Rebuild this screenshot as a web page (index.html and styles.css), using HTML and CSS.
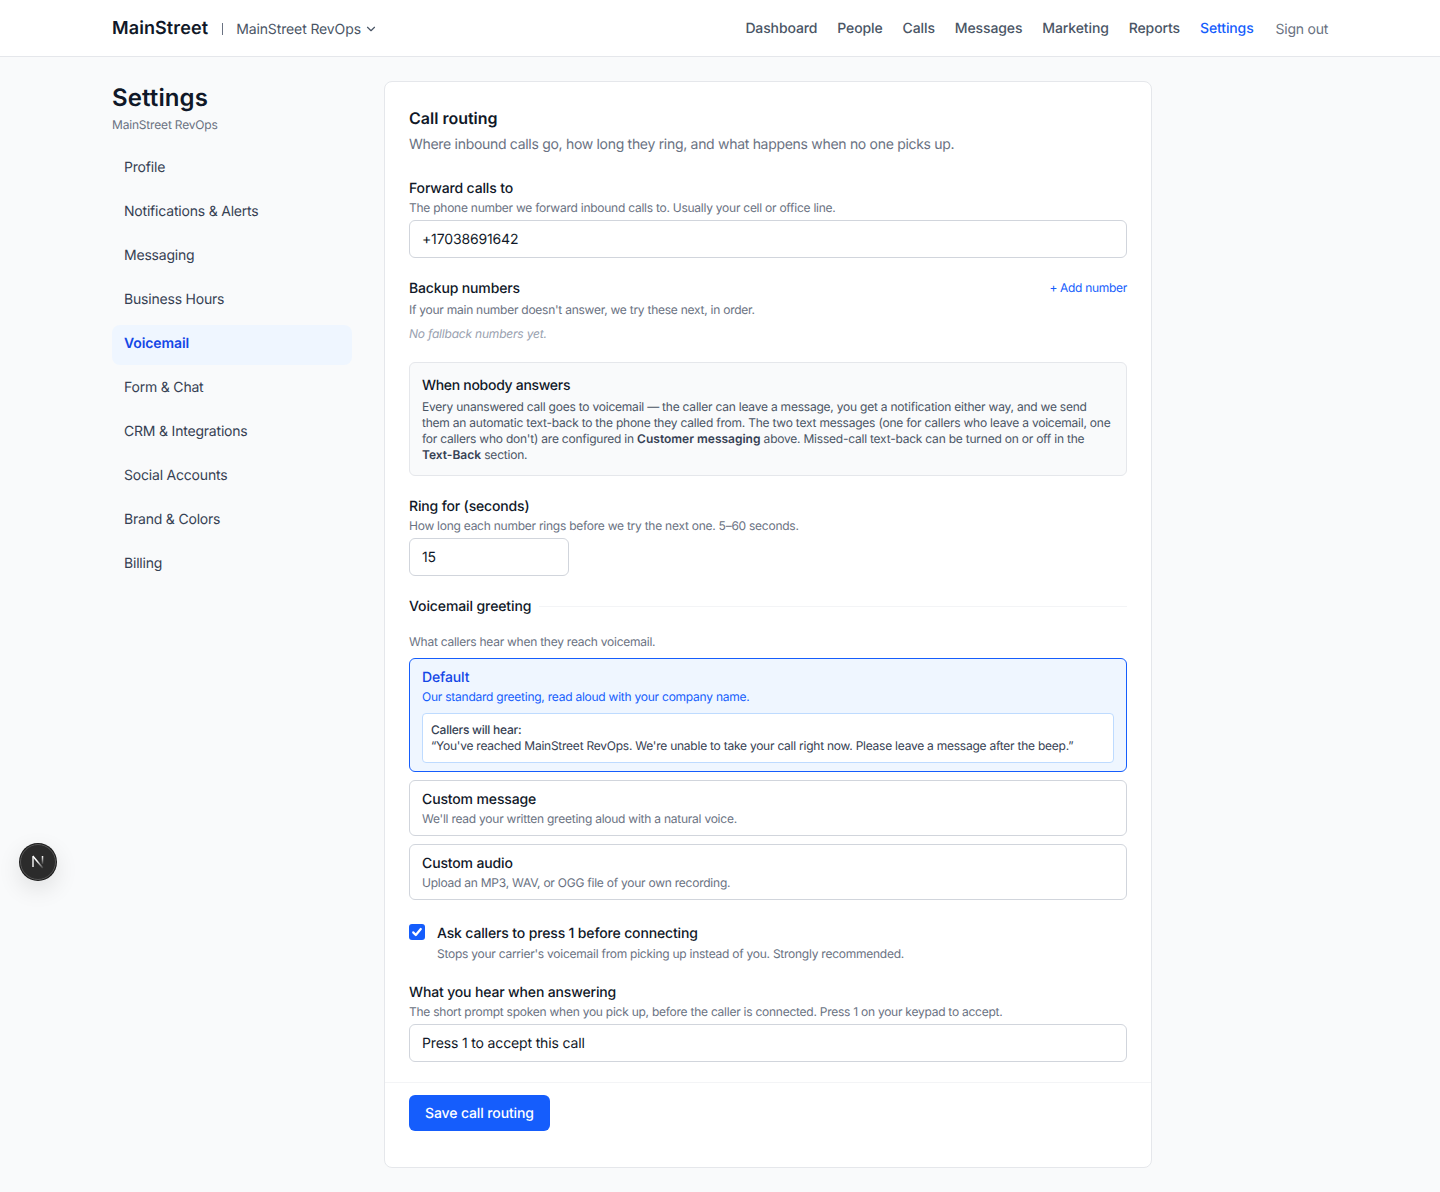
FILE: index.html
```html
<!DOCTYPE html>
<html lang="en">
<head>
  <meta charset="UTF-8">
  <title>Settings - Call routing</title>
  <link rel="stylesheet" href="styles.css">
</head>
<body>

  <header class="topbar">
    <div class="topbar-inner">
      <div class="brand">
        <span class="logo">MainStreet</span>
        <span class="brand-sep"></span>
        <span class="account">MainStreet RevOps
          <svg width="14" height="14" viewBox="0 0 24 24" fill="none" stroke="currentColor" stroke-width="2" stroke-linecap="round" stroke-linejoin="round"><path d="M6 9l6 6 6-6"/></svg>
        </span>
      </div>
      <nav class="topnav">
        <a>Dashboard</a>
        <a>People</a>
        <a>Calls</a>
        <a>Messages</a>
        <a>Marketing</a>
        <a>Reports</a>
        <a class="active">Settings</a>
        <a class="signout">Sign out</a>
      </nav>
    </div>
  </header>

  <div class="page">
    <aside class="sidebar">
      <h1>Settings</h1>
      <p class="sidebar-sub">MainStreet RevOps</p>
      <ul class="sidenav">
        <li>Profile</li>
        <li>Notifications &amp; Alerts</li>
        <li>Messaging</li>
        <li>Business Hours</li>
        <li class="active">Voicemail</li>
        <li>Form &amp; Chat</li>
        <li>CRM &amp; Integrations</li>
        <li>Social Accounts</li>
        <li>Brand &amp; Colors</li>
        <li>Billing</li>
      </ul>
    </aside>

    <main class="card">
      <div class="card-body">
        <h2>Call routing</h2>
        <p class="card-sub">Where inbound calls go, how long they ring, and what happens when no one picks up.</p>

        <div class="field forward">
          <div class="label">Forward calls to</div>
          <div class="hint">The phone number we forward inbound calls to. Usually your cell or office line.</div>
          <input class="input" type="text" value="+17038691642">
        </div>

        <div class="backup">
          <div class="backup-head">
            <div class="label">Backup numbers</div>
            <a class="add-link">+ Add number</a>
          </div>
          <div class="hint">If your main number doesn't answer, we try these next, in order.</div>
          <div class="empty">No fallback numbers yet.</div>
        </div>

        <div class="notice">
          <div class="label">When nobody answers</div>
          <p>Every unanswered call goes to voicemail — the caller can leave a message, you get a notification either way, and we send them an automatic text-back to the phone they called from. The two text messages (one for callers who leave a voicemail, one for callers who don't) are configured in <b>Customer messaging</b> above. Missed-call text-back can be turned on or off in the <b>Text-Back</b> section.</p>
        </div>

        <div class="field ring">
          <div class="label">Ring for (seconds)</div>
          <div class="hint">How long each number rings before we try the next one. 5–60 seconds.</div>
          <input class="input input-short" type="text" value="15">
        </div>

        <div class="section-title">
          <span>Voicemail greeting</span>
          <div class="section-line"></div>
        </div>
        <div class="hint greeting-hint">What callers hear when they reach voicemail.</div>

        <div class="options">
          <div class="option selected">
            <div class="option-title">Default</div>
            <div class="option-desc">Our standard greeting, read aloud with your company name.</div>
            <div class="preview">
              <div class="preview-label">Callers will hear:</div>
              <div>“You've reached MainStreet RevOps. We're unable to take your call right now. Please leave a message after the beep.”</div>
            </div>
          </div>
          <div class="option">
            <div class="option-title">Custom message</div>
            <div class="option-desc">We'll read your written greeting aloud with a natural voice.</div>
          </div>
          <div class="option">
            <div class="option-title">Custom audio</div>
            <div class="option-desc">Upload an MP3, WAV, or OGG file of your own recording.</div>
          </div>
        </div>

        <div class="check-row">
          <span class="checkbox">
            <svg width="12" height="12" viewBox="0 0 12 12" fill="none" stroke="#fff" stroke-width="2.2" stroke-linecap="round" stroke-linejoin="round"><path d="M2.2 6.4l2.6 2.6 5-6"/></svg>
          </span>
          <div>
            <div class="label">Ask callers to press 1 before connecting</div>
            <div class="hint check-hint">Stops your carrier's voicemail from picking up instead of you. Strongly recommended.</div>
          </div>
        </div>

        <div class="field answering">
          <div class="label">What you hear when answering</div>
          <div class="hint">The short prompt spoken when you pick up, before the caller is connected. Press 1 on your keypad to accept.</div>
          <input class="input" type="text" value="Press 1 to accept this call">
        </div>
      </div>

      <div class="card-footer">
        <button class="save">Save call routing</button>
      </div>
    </main>
  </div>

  <div class="dev-badge">
    <svg width="16" height="16" viewBox="0 0 16 16" fill="none" stroke-width="1.5">
      <defs>
        <linearGradient id="nDiag" x1="3" y1="2" x2="13" y2="14" gradientUnits="userSpaceOnUse">
          <stop offset="0.4" stop-color="#fff"/>
          <stop offset="1" stop-color="#fff" stop-opacity="0.1"/>
        </linearGradient>
        <linearGradient id="nStem" x1="12" y1="2" x2="12" y2="10" gradientUnits="userSpaceOnUse">
          <stop offset="0" stop-color="#fff"/>
          <stop offset="1" stop-color="#fff" stop-opacity="0.1"/>
        </linearGradient>
      </defs>
      <path d="M3 13V2.5" stroke="#eee"/>
      <path d="M2.8 2L12.8 14" stroke="url(#nDiag)"/>
      <path d="M12.5 2v8" stroke="url(#nStem)"/>
    </svg>
  </div>

</body>
</html>
```

FILE: styles.css
```css
* {
  box-sizing: border-box;
}
body {
  margin: 0;
  background-color: #f9fafb;
  font-family: 'Inter', sans-serif;
  text-rendering: geometricPrecision;
  color: #101828;
  min-height: 1192px;
}

/* top bar */
.topbar {
  background-color: #ffffff;
  border-bottom: 1px solid #e5e7eb;
  height: 57px;
}
.topbar-inner {
  width: 1216px;
  margin: 0 auto;
  height: 56px;
  display: flex;
  justify-content: space-between;
  align-items: center;
}
.brand {
  display: flex;
  align-items: center;
}
.logo {
  font-size: 18px;
  font-weight: 600;
  letter-spacing: 0.1px;
  color: #101828;
}
.brand-sep {
  width: 1px;
  height: 12px;
  background-color: #6a7282;
  margin: 2px 13px 0 14px;
}
.account {
  font-size: 14px;
  letter-spacing: -0.12px;
  color: #4a5565;
  display: flex;
  align-items: center;
  gap: 3px;
  margin-top: 2px;
}
.topnav {
  display: flex;
  gap: 20px;
  align-items: center;
  font-size: 14px;
  font-weight: 500;
  letter-spacing: -0.12px;
  color: #4a5565;
}
.topnav .active {
  color: #155dfc;
}
.topnav .signout {
  font-weight: 400;
  letter-spacing: -0.25px;
  color: #6a7282;
  margin-top: 2px;
  margin-left: 2px;
}

/* layout */
.page {
  width: 1216px;
  margin: 0 auto;
  padding-top: 24px;
  display: flex;
  gap: 32px;
  align-items: flex-start;
}
.sidebar {
  width: 240px;
  flex-shrink: 0;
}
.sidebar h1 {
  margin: 0;
  padding-top: 1px;
  font-size: 24px;
  line-height: 32px;
  font-weight: 600;
  letter-spacing: 0.1px;
  color: #101828;
}
.sidebar-sub {
  margin: 3px 0 0;
  font-size: 12px;
  line-height: 16px;
  letter-spacing: -0.18px;
  color: #6a7282;
}
.sidenav {
  list-style: none;
  margin: 16px 0 0;
  padding: 0;
  display: flex;
  flex-direction: column;
  gap: 4px;
}
.sidenav li {
  height: 40px;
  line-height: 38px;
  padding: 0 12px;
  font-size: 14px;
  letter-spacing: -0.2px;
  color: #364153;
  border-radius: 8px;
}
.sidenav .active {
  background-color: #eff6ff;
  color: #1447e6;
  font-weight: 600;
  letter-spacing: -0.1px;
}

/* card */
.card {
  width: 768px;
  height: 1087px;
  background-color: #ffffff;
  border: 1px solid #e5e7eb;
  border-radius: 8px;
}
.card-body {
  padding: 24px 24px 20px;
}
h2 {
  margin: 0;
  font-size: 16px;
  line-height: 24px;
  font-weight: 600;
  color: #101828;
}
.card-sub {
  margin: 5px 0 0;
  font-size: 14px;
  line-height: 20px;
  letter-spacing: -0.3px;
  color: #6a7282;
}
.label {
  font-size: 14px;
  line-height: 22px;
  margin-bottom: -2px;
  font-weight: 500;
  letter-spacing: -0.15px;
  color: #101828;
}
.hint {
  font-size: 12px;
  line-height: 16px;
  letter-spacing: -0.25px;
  color: #6a7282;
}
.input {
  display: block;
  width: 100%;
  height: 38px;
  padding: 0 12px;
  border: 1px solid #d1d5dc;
  border-radius: 6px;
  background-color: #ffffff;
  font-family: inherit;
  text-rendering: inherit;
  font-size: 14px;
  letter-spacing: -0.15px;
  color: #101828;
}
.input-short {
  width: 160px;
}
.field .hint {
  margin-top: 2px;
  margin-bottom: 4px;
}
.forward {
  margin-top: 23px;
}
.backup {
  margin-top: 20px;
}
.backup-head {
  display: flex;
  justify-content: space-between;
  align-items: flex-start;
}
.backup .hint {
  margin-top: 4px;
}
.add-link {
  font-size: 12px;
  line-height: 20px;
  letter-spacing: -0.3px;
  color: #155dfc;
}
.empty {
  margin-top: 8px;
  font-size: 12px;
  line-height: 16px;
  font-style: italic;
  letter-spacing: -0.2px;
  color: #99a1af;
}
.notice {
  margin-top: 20px;
  height: 114px;
  padding: 12px;
  background-color: #f9fafb;
  border: 1px solid #e5e7eb;
  border-radius: 6px;
}
.notice .label {
  letter-spacing: -0.3px;
}
.notice p {
  margin: 4px 0 0;
  font-size: 12px;
  line-height: 16px;
  letter-spacing: -0.22px;
  color: #4a5565;
}
.notice b {
  font-weight: 600;
  letter-spacing: 0;
  color: #364153;
}
.ring {
  margin-top: 20px;
}
.section-title {
  margin-top: 20px;
  display: flex;
  align-items: center;
  gap: 8px;
  font-size: 14px;
  line-height: 20px;
  font-weight: 500;
  letter-spacing: -0.11px;
  color: #101828;
}
.section-title span {
  line-height: 22px;
  margin-bottom: -2px;
}
.section-line {
  flex: 1;
  height: 1px;
  background-color: #f3f4f6;
}
.greeting-hint {
  margin-top: 18px;
}

/* greeting options */
.options {
  margin-top: 8px;
  display: flex;
  flex-direction: column;
  gap: 8px;
}
.option {
  padding: 8px 12px;
  border: 1px solid #d1d5dc;
  border-radius: 6px;
  background-color: #ffffff;
}
.option-title {
  font-size: 14px;
  line-height: 22px;
  margin-bottom: -2px;
  font-weight: 500;
  letter-spacing: -0.14px;
  color: #101828;
}
.option-desc {
  margin-top: 2px;
  font-size: 12px;
  line-height: 16px;
  letter-spacing: -0.24px;
  color: #6a7282;
}
.option.selected {
  border-color: #155dfc;
  background-color: #eff6ff;
}
.selected .option-title {
  color: #1447e6;
}
.selected .option-desc {
  color: #155dfc;
}
.preview {
  margin-top: 8px;
  padding: 8px;
  background-color: #ffffff;
  border: 1px solid #bedbff;
  border-radius: 4px;
  font-size: 12px;
  line-height: 16px;
  letter-spacing: -0.24px;
  color: #364153;
}
.preview-label {
  font-weight: 500;
}

/* checkbox */
.check-row {
  margin-top: 23px;
  display: flex;
  gap: 12px;
  align-items: flex-start;
}
.checkbox {
  width: 16px;
  height: 16px;
  margin-top: 1px;
  background-color: #155dfc;
  border-radius: 3px;
  display: flex;
  align-items: center;
  justify-content: center;
}
.check-row .check-hint {
  margin-top: 3px;
}
.answering {
  margin-top: 20px;
}

/* footer */
.card-footer {
  border-top: 1px solid #f3f4f6;
  padding: 12px 24px;
}
.save {
  height: 36px;
  padding: 0 16px;
  background-color: #155dfc;
  color: #ffffff;
  border: none;
  border-radius: 6px;
  font-family: inherit;
  text-rendering: inherit;
  font-size: 14px;
  font-weight: 500;
  letter-spacing: -0.12px;
}

/* dev tools badge floats over the page */
.dev-badge {
  position: fixed;
  left: 20px;
  top: 844px;
  width: 36px;
  height: 36px;
  border-radius: 50%;
  background-color: #2b2b2b;
  border: 1px solid #555;
  box-shadow: 0 0 0 1px #1a1a1a, 0 8px 24px rgba(0, 0, 0, 0.12);
  display: flex;
  align-items: center;
  justify-content: center;
}
```
